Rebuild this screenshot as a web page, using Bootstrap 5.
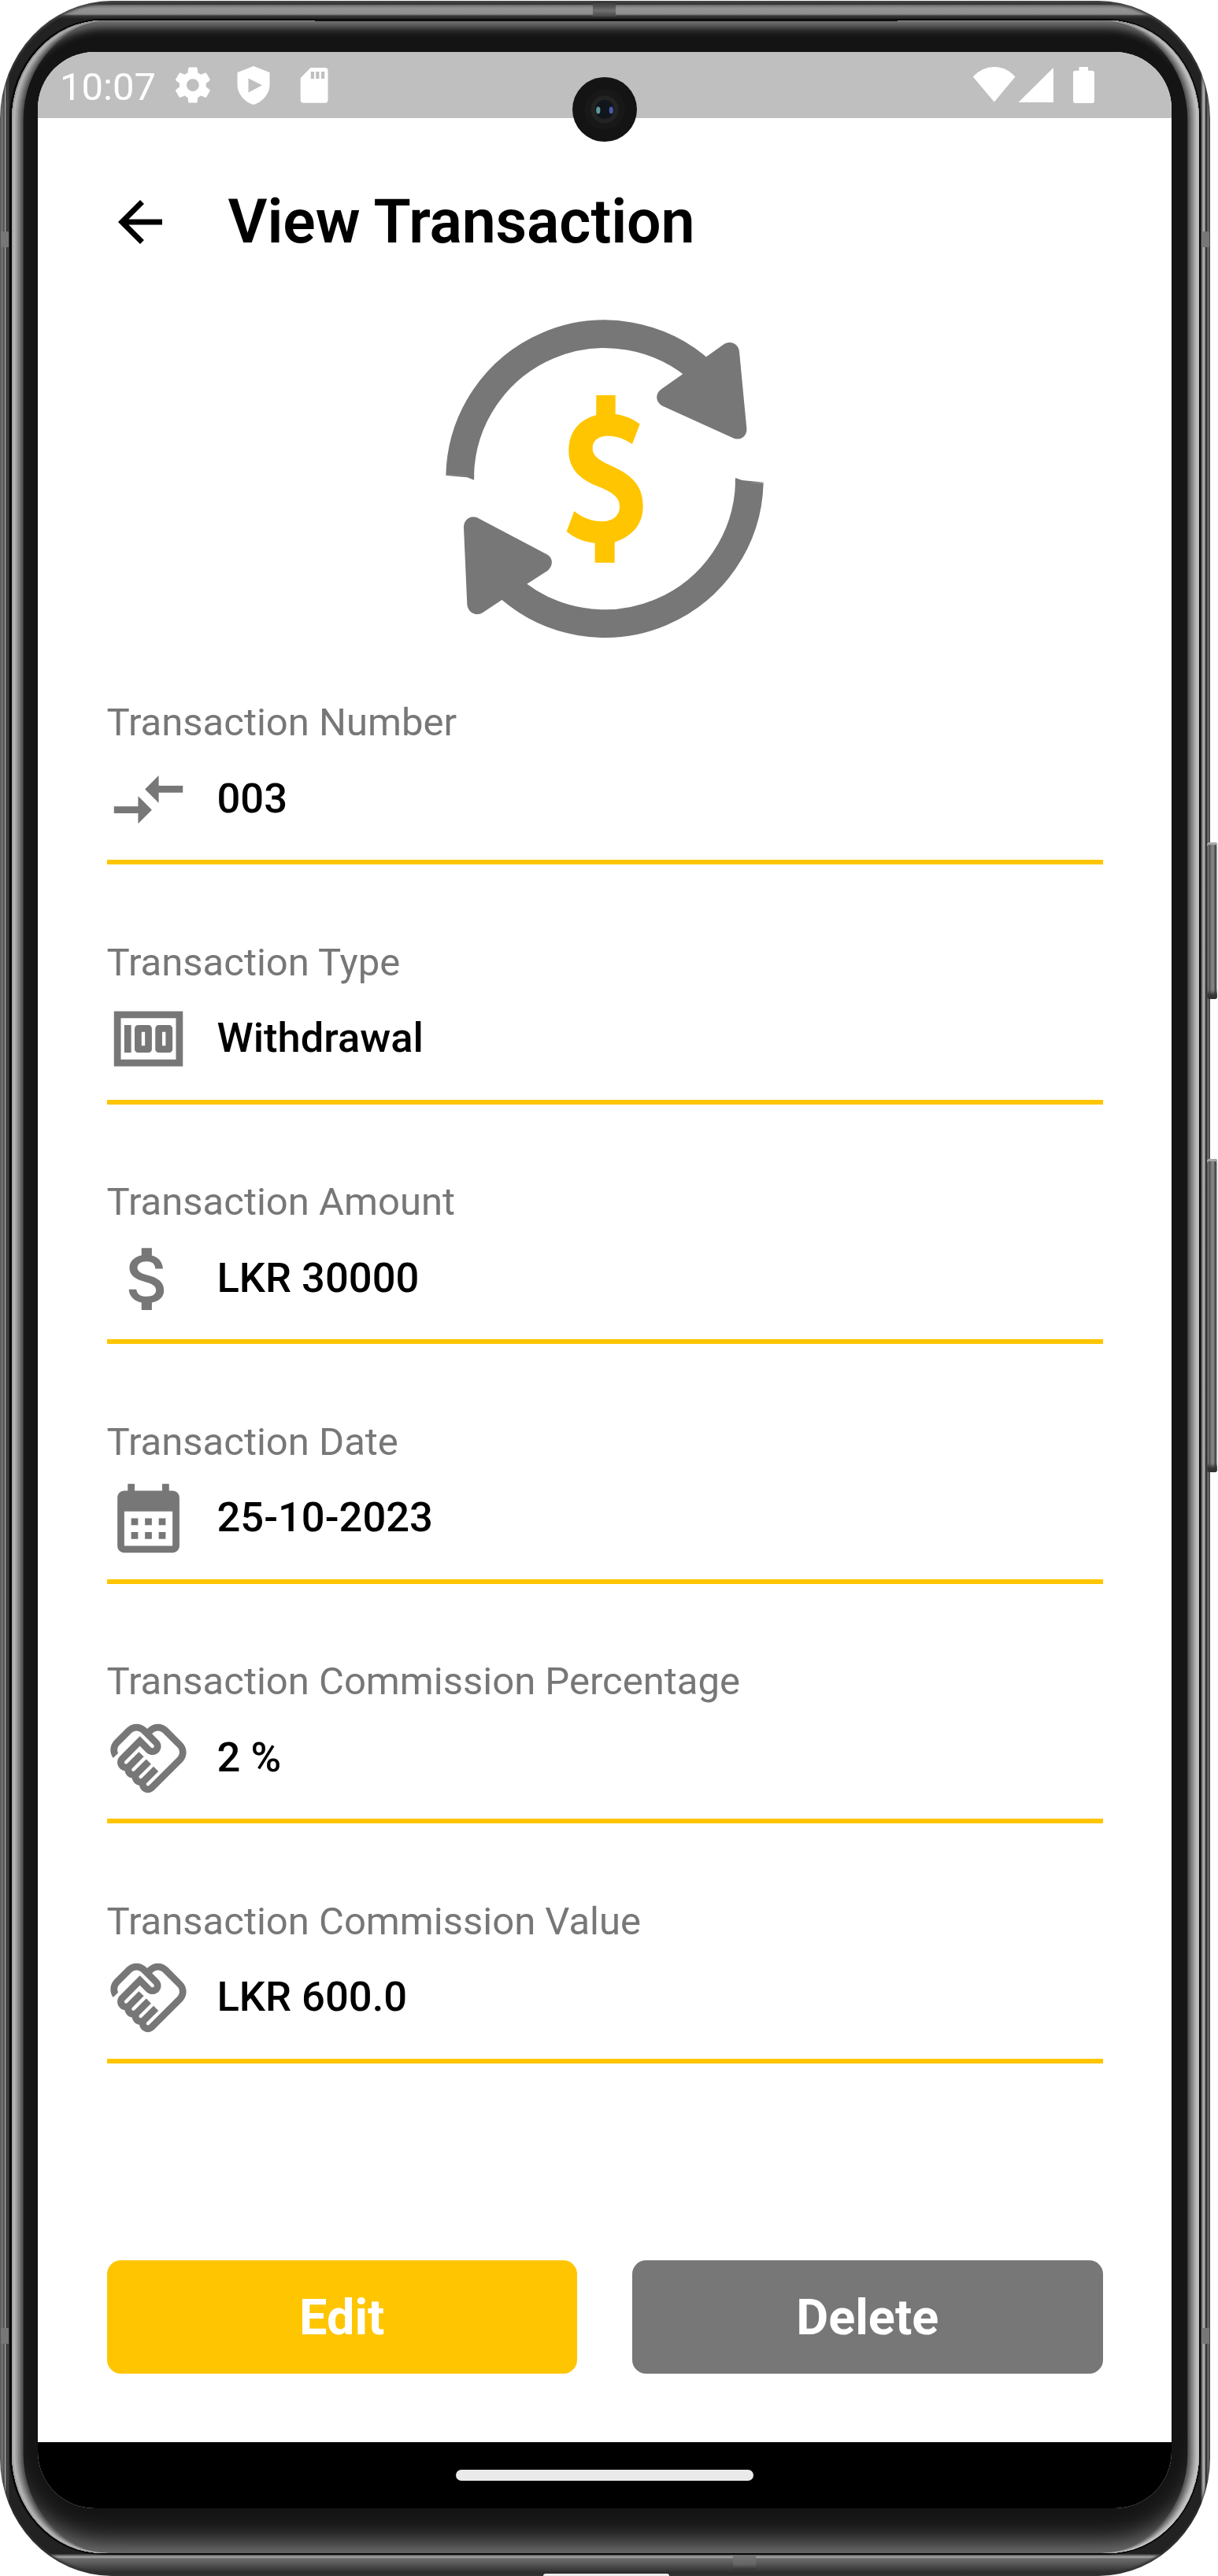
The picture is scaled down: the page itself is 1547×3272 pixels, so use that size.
<!DOCTYPE html>
<html lang="en">
<head>
<meta charset="utf-8">
<meta name="viewport" content="width=device-width, initial-scale=1">
<title>View Transaction</title>
<link href="https://cdn.jsdelivr.net/npm/bootstrap@5.3.0/dist/css/bootstrap.min.css" rel="stylesheet">
<style>
  :root { --amber: #ffc500; --ash: #777777; }
  body { font-family: Roboto, "Liberation Sans", sans-serif; color: #000; background: #fff; }
  .stage { width: 1547px; height: 3272px; }

  /* Handset: outer rim, seam, glass, display */
  .handset {
    width: 1537px; height: 3271px; margin-top: 1px; padding: 23px 12px 27px;
    border-radius: 142px / 150px;
    background:
      linear-gradient(to bottom, #3a3a3a 0, #2a2a2a 4px, #777 6px, #949494 10px, #8d8d8d 17px, #3a3a3a 19px, #222 23px, transparent 24px),
      linear-gradient(to top, #1c1c1c 0, #2c2c2c 4px, #5c5c5c 17px, #6a6a6a 22px, #aaa 24px, #555 27px, transparent 28px),
      linear-gradient(to right, #848484 0, #6e6e6e 4px, #333 5px, #a0a0a0 6.5px, #333 8.5px, #4a4a4a 10px, #222 12px, #222 calc(100% - 12px), #a8a8a8 calc(100% - 9px), #aaa calc(100% - 7px), #333 calc(100% - 5.5px), #3c3c3c calc(100% - 4px), #777 calc(100% - 3px), #555 100%);
    box-shadow: inset 0 3px 3px #444, inset 0 -3px 3px #333;
  }
  .seam { height: 100%; padding: 2px 2.5px; background: #080808; border-radius: 118px / 128px; }
  .glass {
    height: 100%; padding: 40px 34.5px 57px 33.5px; border-radius: 116px / 126px; background: #141414;
    box-shadow:
      inset 0 1px 1px #8a8a8a,
      inset 2px 0 0 #a6a6a6, inset -2px 0 0 #c2c2c2,
      inset 4px 0 0 #b6b6b6, inset -4px 0 0 #bdbdbd,
      inset 6px 0 0 #a6a6a6, inset -6px 0 0 #adadad,
      inset 8px 0 0 #949494, inset -8px 0 0 #999,
      inset 10px 0 0 #808080, inset -10px 0 0 #858585,
      inset 12px 0 0 #6c6c6c, inset -12px 0 0 #707070,
      inset 14.5px 0 0 #565656, inset -14.5px 0 0 #5a5a5a,
      inset 0 11px 12px -2px #777, inset 0 -26px 34px -14px #828282;
  }
  .display-panel { height: 100%; border-radius: 72px; background: #fff; }
  .seam-lip { left: 400px; top: 25px; width: 740px; height: 2px; background: #111; }
  .band { background: #6b6b6b; }
  .band-top { left: 753px; top: 2px; width: 29px; height: 19px; background: linear-gradient(#333, #707070 60%, #444); }
  .band-bottom { left: 931px; top: 3246px; width: 29px; height: 18px; background: linear-gradient(#777, #666 60%, #333); }
  .band-side { width: 10px; height: 20px; background: #777; }
  .band-l { left: 1px; } .band-r { left: 1526px; }
  .band-hi { top: 294px; } .band-lo { top: 2957px; }
  .port { left: 690px; top: 3269px; width: 160px; height: 6px; border-radius: 6px; background: #eee; }
  .side-key {
    left: 1533px; width: 13px; border-radius: 3px;
    background: linear-gradient(to right, #4a4a4a 0, #999 2px, #444 3px, #7a7a7a 5px, #888 9px, #333 10.5px, #bbb 12px, #ddd 13px);
    box-shadow: inset 0 3px 1px #aaa, inset 0 -8px 4px #333;
  }
  .key-power { top: 1070px; height: 199px; }
  .key-volume { top: 1472px; height: 398px; }

  /* System bars */
  .status-strip { height: 84px; background: #bfbfbf; color: #fff; font-size: 49px; line-height: 57px; padding: 16px 98px 0 28px; }
  .clock { width: 147.4px; }
  .lens { left: 727px; top: 98px; width: 82px; height: 82px; }
  .nav-strip { height: 84px; background: #000; }
  .nav-pill { width: 378px; height: 14px; border-radius: 7px; background: #eaeaea; }

  /* Screen content */
  .screen-body { padding: 84px 87.5px 0; }
  .app-head { height: 96px; gap: 70px; }
  .app-title { font-size: 77px; font-weight: 600; line-height: 90px; letter-spacing: -.1px; margin: 0; }
  .emblem { height: 460px; margin-top: 50px; }
  .detail-list { margin-top: 49px; }
  .detail { height: 304.5px; }
  .detail-label { font-size: 49px; line-height: 58px; color: var(--ash); }
  .detail-line { height: 145px; padding-top: 15.5px; }
  .detail-value { font-size: 52.5px; font-weight: 500; line-height: 62px; height: 105px; padding-top: 20px; margin-left: 35px; }
  .rule { height: 6px; background: var(--amber); }
  .glyph { width: 105px; height: 105px; fill: var(--ash); flex: none; }
  .actions { margin-top: 155px; gap: 70px; }
  .action-btn { height: 143.5px; border: 0; border-radius: 17.5px; padding: 3px 0 0; font-size: 63px; font-weight: 700; line-height: 74px; color: #fff; }
  .action-edit, .action-edit:hover { background: var(--amber); color: #fff; }
  .action-delete, .action-delete:hover { background: var(--ash); color: #fff; }
</style>
</head>
<body>
<svg class="d-none">
  <symbol id="g-shake" viewBox="0 0 24 24"><path d="M12.22 19.85c-.18.18-.5.21-.71 0-.18-.18-.21-.5 0-.71l3.39-3.39-1.41-1.41-3.39 3.39c-.19.2-.51.19-.71 0-.21-.21-.18-.53 0-.71l3.39-3.39-1.41-1.41-3.39 3.39c-.18.18-.5.21-.71 0-.19-.19-.19-.51 0-.71l3.39-3.39L9.240 10.100l-3.390 3.390c-.18.18-.5.21-.71 0-.19-.2-.19-.51 0-.71l4.380-4.380 1.870 1.860c.95.95 2.590.94 3.540 0 .98-.98.98-2.560 0-3.540l-1.860-1.860.28-.28c.78-.78 2.050-.78 2.830 0l4.240 4.240c.78.78.78 2.050 0 2.830L12.220 19.850zM21.830 13.070c1.560-1.560 1.560-4.090 0-5.660l-4.240-4.240c-1.560-1.560-4.090-1.560-5.660 0l-.28.28-.28-.28c-1.560-1.560-4.090-1.560-5.660 0L2.170 6.710C.75 8.130.62 10.340 1.770 11.900l1.450-1.450C2.830 9.700 2.960 8.750 3.590 8.120l3.540-3.540c.78-.78 2.050-.78 2.830 0l3.560 3.560c.18.18.21.5 0 .71-.21.21-.53.18-.71 0L9.520 5.570l-5.800 5.790c-.98.97-.98 2.560 0 3.540.39.39.89.63 1.420.7.07.52.3 1.020.7 1.420.4.4.9.63 1.420.7.07.52.3 1.020.7 1.420.4.4.9.63 1.420.7.07.54.31 1.030.7 1.420.47.47 1.100.73 1.770.73s1.300-.26 1.770-.73L21.830 13.070z"/></symbol>
</svg>

<div class="stage position-relative overflow-hidden">
  <div class="side-key key-power position-absolute"></div>
  <div class="side-key key-volume position-absolute"></div>

  <div class="handset">
    <div class="seam">
      <div class="glass">
        <main class="display-panel d-flex flex-column overflow-hidden">

          <div class="status-strip d-flex align-items-start">
            <span class="clock">10:07</span>
            <svg width="200" height="57" viewBox="0 0 200 57" fill="#fff">
              <g transform="translate(-5.1 -.9) scale(2.25)"><path d="M19.43 12.98c.04-.32.07-.64.07-.98s-.03-.66-.07-.98l2.11-1.65c.19-.15.24-.42.12-.64l-2-3.46c-.12-.22-.39-.3-.61-.22l-2.49 1c-.52-.4-1.08-.73-1.69-.98l-.38-2.65C14.46 2.18 14.25 2 14 2h-4c-.25 0-.46.18-.49.42l-.38 2.65c-.61.25-1.17.59-1.69.98l-2.49-1c-.23-.09-.49 0-.61.22l-2 3.46c-.13.22-.07.49.12.64l2.11 1.65c-.04.32-.07.65-.07.98s.03.66.07.98l-2.11 1.65c-.19.15-.24.42-.12.64l2 3.46c.12.22.39.3.61.22l2.49-1c.52.4 1.08.73 1.69.98l.38 2.65c.03.24.24.42.49.42h4c.25 0 .46-.18.49-.42l.38-2.65c.61-.25 1.17-.59 1.69-.98l2.49 1c.23.09.49 0 .61-.22l2-3.46c.12-.22.07-.49-.12-.64l-2.11-1.65zM12 15.5c-1.93 0-3.5-1.57-3.5-3.5s1.57-3.5 3.5-3.5 3.5 1.57 3.5 3.5-1.57 3.5-3.5 3.5z"/></g>
              <path fill-rule="evenodd" d="M99 2 119.500 10V26C119.500 37 110 48 99 51 88 48 78.500 37 78.500 26V10ZM92.500 17.500V35.500L110 26.300Z"/>
              <path fill-rule="evenodd" d="M171.500 4H190Q193.500 4 193.500 7.500V45Q193.500 48.700 190 48.700H162.500Q158.700 48.700 158.700 45V17ZM171.800 9V18H176V9ZM178.200 9V18H182.400V9ZM184.900 9V18H189.200V9Z"/>
            </svg>
            <svg class="ms-auto" width="155" height="57" viewBox="0 0 155 57" fill="#fff">
              <path d="M.8 15.500Q12 3 27.800 3T54.500 15.500L27.800 47.500ZM103 4V48H58.500Z"/>
              <path d="M135.500 3H147V7.800H152Q155 7.800 155 10.500V46Q155 49 152 49H131Q128 49 128 46V10.500Q128 7.800 131 7.800H135.500Z"/>
            </svg>
          </div>

          <div class="screen-body flex-grow-1">
            <header class="app-head d-flex align-items-center">
              <svg width="84" height="84" viewBox="0 0 24 24"><path d="M20 11H7.830l5.590-5.590L12 4l-8 8 8 8 1.410-1.410L7.830 13H20v-2z"/></svg>
              <h1 class="app-title">View Transaction</h1>
            </header>

            <div class="emblem d-flex justify-content-center">
              <svg width="460" height="460" viewBox="-6 0 1380 1380">
                <g fill="none" stroke="#777" stroke-width="107">
                  <path d="M132.500 671A551.500 551.500 0 0 1 1057 278.300"/>
                  <path d="M1235.500 699A551.500 551.500 0 0 1 311 1090.700"/>
                </g>
                <g fill="#777">
                  <path d="M79 670H187L186 689 160 679 79 672ZM1290 700H1181L1182 681 1208 690 1290 698Z"/>
                  <path d="M1072 219 1136 173C1160 155 1194 168 1197 200L1225 493C1227 520 1204 540 1176 530L905 407C877 393 875 360 900 343L981 286Z"/>
                  <path d="M291 1147 220 1194C196 1209 165 1198 160 1165L147 870C147 841 170 823 197 832L463 972C489 986 488 1017 467 1034L388 1085Z"/>
                </g>
                <path fill="#ffc500" d="M652 366H725V438C760 443 790 455 818 476L789 552C760 532 730 521 697 521C658 521 637 540 638 570C639 595 656 611 713 637C790 672 830 712 830 790C830 855 793 903 722 926V1004H647V929C605 925 568 911 539 885L568 808C600 834 638 847 672 847C715 847 741 824 741 791C741 760 722 739 660 714C580 682 547 640 547 578C547 508 583 461 652 442Z"/>
              </svg>
            </div>

            <section class="detail-list">
              <div class="detail">
                <div class="detail-label">Transaction Number</div>
                <div class="detail-line d-flex">
                  <svg class="glyph" viewBox="0 0 24 24"><path d="M9.010 14H2v2h7.010v3L13 15l-3.990-4v3zm5.980-1v-3H22V8h-7.010V5L11 9l3.990 4z"/></svg>
                  <div class="detail-value">003</div>
                </div>
                <div class="rule"></div>
              </div>
              <div class="detail">
                <div class="detail-label">Transaction Type</div>
                <div class="detail-line d-flex">
                  <svg class="glyph" viewBox="0 0 24 24"><path d="M5 8h2v8H5zm7 0H9c-.55 0-1 .45-1 1v6c0 .55.45 1 1 1h3c.55 0 1-.45 1-1V9c0-.55-.45-1-1-1zm-1 6h-1v-4h1v4zm7-6h-3c-.55 0-1 .45-1 1v6c0 .55.45 1 1 1h3c.55 0 1-.45 1-1V9c0-.55-.45-1-1-1zm-1 6h-1v-4h1v4zM2 4v16h20V4H2zm18 14H4V6h16v12z"/></svg>
                  <div class="detail-value">Withdrawal</div>
                </div>
                <div class="rule"></div>
              </div>
              <div class="detail">
                <div class="detail-label">Transaction Amount</div>
                <div class="detail-line d-flex">
                  <svg class="glyph" viewBox="0 0 24 24"><path d="M11.800 10.900c-2.270-.59-3-1.200-3-2.150 0-1.090 1.010-1.850 2.700-1.850 1.780 0 2.440.85 2.500 2.100h2.210c-.07-1.720-1.120-3.300-3.210-3.810V3h-3v2.160c-1.940.42-3.500 1.680-3.500 3.610 0 2.310 1.910 3.460 4.700 4.130 2.500.6 3 1.480 3 2.410 0 .69-.49 1.790-2.700 1.790-2.060 0-2.870-.92-2.980-2.100h-2.200c.12 2.190 1.760 3.420 3.680 3.830V21h3v-2.150c1.950-.37 3.500-1.500 3.500-3.550 0-2.840-2.430-3.810-4.700-4.400z"/></svg>
                  <div class="detail-value">LKR 30000</div>
                </div>
                <div class="rule"></div>
              </div>
              <div class="detail">
                <div class="detail-label">Transaction Date</div>
                <div class="detail-line d-flex">
                  <svg class="glyph" viewBox="0 0 24 24"><path d="M19 4h-1V2h-2v2H8V2H6v2H5c-1.110 0-1.990.9-1.990 2L3 20c0 1.100.89 2 2 2h14c1.100 0 2-.9 2-2V6c0-1.100-.9-2-2-2zm0 16H5V10h14v10zM9 14H7v-2h2v2zm4 0h-2v-2h2v2zm4 0h-2v-2h2v2zm-8 4H7v-2h2v2zm4 0h-2v-2h2v2zm4 0h-2v-2h2v2z"/></svg>
                  <div class="detail-value">25-10-2023</div>
                </div>
                <div class="rule"></div>
              </div>
              <div class="detail">
                <div class="detail-label">Transaction Commission Percentage</div>
                <div class="detail-line d-flex">
                  <svg class="glyph"><use href="#g-shake"/></svg>
                  <div class="detail-value">2 %</div>
                </div>
                <div class="rule"></div>
              </div>
              <div class="detail">
                <div class="detail-label">Transaction Commission Value</div>
                <div class="detail-line d-flex">
                  <svg class="glyph"><use href="#g-shake"/></svg>
                  <div class="detail-value">LKR 600.0</div>
                </div>
                <div class="rule"></div>
              </div>
            </section>

            <div class="actions d-flex">
              <button type="button" class="btn action-btn action-edit flex-fill w-50">Edit</button>
              <button type="button" class="btn action-btn action-delete flex-fill w-50">Delete</button>
            </div>
          </div>

          <div class="nav-strip d-flex align-items-center justify-content-center">
            <div class="nav-pill"></div>
          </div>
        </main>
      </div>
    </div>
  </div>

  <svg class="lens position-absolute" viewBox="0 0 82 82">
    <circle cx="41" cy="41" r="41" fill="#141414"/>
    <circle cx="41" cy="41" r="26" fill="#181818"/>
    <circle cx="41" cy="41" r="17.500" fill="#232323"/>
    <circle cx="41" cy="41" r="12" fill="#10161c"/>
    <ellipse cx="32.800" cy="42" rx="2.600" ry="4.500" fill="#5f9a9c"/>
    <ellipse cx="49.300" cy="42" rx="2.600" ry="4.500" fill="#4a5aa8"/>
  </svg>
  <div class="seam-lip position-absolute"></div>
  <div class="band band-top position-absolute"></div>
  <div class="band band-bottom position-absolute"></div>
  <div class="band band-side band-l band-hi position-absolute"></div>
  <div class="band band-side band-r band-hi position-absolute"></div>
  <div class="band band-side band-l band-lo position-absolute"></div>
  <div class="band band-side band-r band-lo position-absolute"></div>
  <div class="port position-absolute"></div>
</div>
<script src="https://cdn.jsdelivr.net/npm/bootstrap@5.3.0/dist/js/bootstrap.bundle.min.js"></script>
</body>
</html>
